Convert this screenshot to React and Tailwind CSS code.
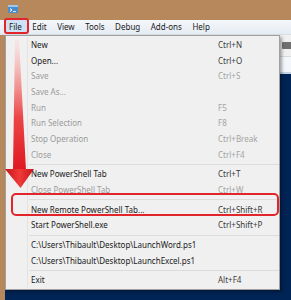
import React from "react";

const items = [
  { t: "New", k: "Ctrl+N" },
  { t: "Open...", k: "Ctrl+O" },
  { t: "Save", k: "Ctrl+S", d: true },
  { t: "Save As...", k: "", d: true },
  { t: "Run", k: "F5", d: true },
  { t: "Run Selection", k: "F8", d: true },
  { t: "Stop Operation", k: "Ctrl+Break", d: true },
  { t: "Close", k: "Ctrl+F4", d: true },
  { sep: true },
  { t: "New PowerShell Tab", k: "Ctrl+T" },
  { t: "Close PowerShell Tab", k: "Ctrl+W", d: true },
  { sep: true },
  { t: "New Remote PowerShell Tab...", k: "Ctrl+Shift+R" },
  { t: "Start PowerShell.exe", k: "Ctrl+Shift+P" },
  { sep: true },
  { t: "C:\\Users\\Thibault\\Desktop\\LaunchWord.ps1", k: "" },
  { t: "C:\\Users\\Thibault\\Desktop\\LaunchExcel.ps1", k: "" },
  { sep: true },
  { t: "Exit", k: "Alt+F4" },
];

const menus = ["Edit", "View", "Tools", "Debug", "Add-ons", "Help"];

export default function App() {
  return (
    <div className="relative w-[291px] h-[300px] overflow-hidden bg-[#b6885b] font-['Noto_Sans',sans-serif] text-[8px] leading-none text-[#1a1a1a]">
      {/* title area */}
      <div className="h-[20px] pl-[8px] pt-[5px]">
        <svg width="10" height="8" viewBox="0 0 10 8">
          <rect x="0" y="0" width="10" height="8" rx="1" fill="#4a8ccc" />
          <rect x="0" y="0" width="10" height="2" fill="#9cc8ee" />
          <path d="M2 3.5 L4 5 L2 6.5" stroke="#fff" strokeWidth="1" fill="none" />
          <rect x="5" y="6" width="3" height="0.8" fill="#fff" />
        </svg>
      </div>
      {/* menu bar */}
      <div className="h-[15px] flex items-center bg-gradient-to-b from-[#f4f7fb] to-[#e6ecf4] border-b border-[#d9dfe7] pl-[9px] gap-[10.5px]">
        <span className="relative">
          <span className="absolute -left-[5px] -top-[5px] w-[25px] h-[16px] rounded-[3px] border-2 border-[#e2252b] bg-[#cfe1f4]" />
          <span className="relative">File</span>
        </span>
        {menus.map((m) => (
          <span key={m}>{m}</span>
        ))}
      </div>
      {/* window body */}
      <div className="flex h-[265px]">
        <div className="w-[5px] bg-[#b6885b]" />
        <div className="flex-1 flex flex-col">
          <div className="h-[21px] bg-[#f0f0f0] flex justify-end items-center">
            <div className="w-[9px] h-[7px] bg-[#707070] rounded-l-[1px]" />
          </div>
          <div className="h-[18px] bg-[#f3f6fa] border-t border-[#dadada] border-b-2 border-b-[#c5d3e4]" />
          <div className="flex-1 bg-[#012456]" />
        </div>
      </div>

      {/* dropdown menu */}
      <div className="absolute left-[5px] top-[35px] w-[275px] border border-[#a0a0a0] bg-[#f0f0f0] py-[1px] shadow-[2px_2px_3px_rgba(0,0,0,0.35)]">
        {items.map((it, i) =>
          it.sep ? (
            <div key={i} className="flex h-[4px]">
              <div className="w-[22px] border-r border-[#e2e3e3]" />
              <div className="flex-1 flex items-center pl-[1px]">
                <div className="w-full h-px bg-[#dcdcdc]" />
              </div>
            </div>
          ) : (
            <div key={i} className="flex h-[15.7px] items-center">
              <div className="w-[22px] h-full border-r border-[#e2e3e3]" />
              <div className={"flex-1 pl-[3px] whitespace-nowrap " + (it.d ? "text-[#9b9b9b]" : "text-[#1a1a1a]")}>
                {it.t}
              </div>
              <div className={"w-[61px] whitespace-nowrap " + (it.d ? "text-[#a3a3a3]" : "text-[#3a3a3a]")}>
                {it.k}
              </div>
            </div>
          )
        )}
      </div>

      {/* red highlight box */}
      <div className="absolute left-[11px] top-[193px] w-[268px] h-[23px] rounded-[5px] border-2 border-[#e2252b]" />

      {/* red arrow */}
      <svg className="absolute left-0 top-[36px]" width="40" height="155" viewBox="0 0 40 155">
        <defs>
          <linearGradient id="ag" x1="0" y1="0" x2="0" y2="1">
            <stop offset="0" stopColor="#fbe0e0" stopOpacity="0.5" />
            <stop offset="0.25" stopColor="#f5a8a8" stopOpacity="0.85" />
            <stop offset="0.6" stopColor="#eb4545" />
            <stop offset="1" stopColor="#e01820" />
          </linearGradient>
          <linearGradient id="ah" x1="0" y1="0" x2="1" y2="0">
            <stop offset="0" stopColor="#c8141b" />
            <stop offset="0.5" stopColor="#f03a3a" />
            <stop offset="1" stopColor="#c8141b" />
          </linearGradient>
        </defs>
        <polygon points="15,3 19,3 26,134 13,134" fill="url(#ag)" />
        <polygon points="5,133 34,133 20.5,152" fill="url(#ah)" />
      </svg>
    </div>
  );
}
